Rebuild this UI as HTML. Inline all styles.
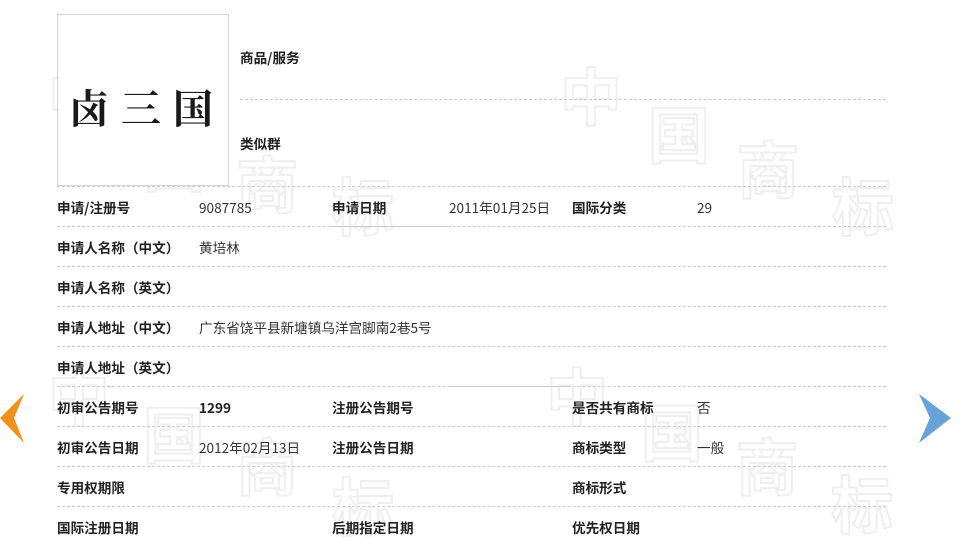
<!DOCTYPE html>
<html><head><meta charset="utf-8"><style>
body{margin:0;width:970px;height:544px;background:#fff;position:relative;overflow:hidden;font-family:"Noto Sans CJK SC","Liberation Sans",sans-serif;font-size:13.6px;color:#333}
.wm{position:absolute;font-size:62px;font-weight:bold;color:transparent;-webkit-text-stroke:2px #efefef;line-height:1;font-family:"WenQuanYi Zen Hei","Noto Sans CJK SC",sans-serif}
.logo{position:absolute;left:57px;top:14px;width:170px;height:170px;border:1px solid #d5d5d5;background:#fff}
.logo span{position:absolute;left:11px;top:68px;font-family:"Noto Serif CJK SC",serif;font-weight:bold;font-size:40px;letter-spacing:12px;color:#1a1a1a;line-height:1.2}
.t{position:absolute;white-space:nowrap;line-height:16px}
.b{font-weight:bold;color:#222}
.ln{position:absolute;border-top:1px dashed #ccc;height:0}
.sl{position:absolute;border-top:1px solid #c8c8c8;height:0}
</style></head><body>
<div class="wm" style="left:48px;top:62px">中</div>
<div class="wm" style="left:143px;top:128px">国</div>
<div class="wm" style="left:236px;top:150px">商</div>
<div class="wm" style="left:332px;top:172px">标</div>
<div class="wm" style="left:560px;top:62px">中</div>
<div class="wm" style="left:648px;top:100px">国</div>
<div class="wm" style="left:737px;top:135px">商</div>
<div class="wm" style="left:832px;top:172px">标</div>
<div class="wm" style="left:48px;top:362px">中</div>
<div class="wm" style="left:143px;top:400px">国</div>
<div class="wm" style="left:236px;top:432px">商</div>
<div class="wm" style="left:332px;top:472px">标</div>
<div class="wm" style="left:546px;top:362px">中</div>
<div class="wm" style="left:641px;top:398px">国</div>
<div class="wm" style="left:736px;top:432px">商</div>
<div class="wm" style="left:831px;top:470px">标</div>

<div class="logo"><span>卤三国</span></div>
<div class="t b" style="left:240px;top:49px">商品/服务</div>
<div class="ln" style="left:240px;width:646px;top:99px"></div>
<div class="t b" style="left:240px;top:135px">类似群</div>
<div class="ln" style="left:57px;width:829px;top:186px"></div>

<div class="t b" style="left:57px;top:199px">申请/注册号</div>
<div class="t" style="left:199px;top:199px">9087785</div>
<div class="t b" style="left:332px;top:199px">申请日期</div>
<div class="t" style="left:449px;top:199px">2011年01月25日</div>
<div class="t b" style="left:572px;top:199px">国际分类</div>
<div class="t" style="left:697px;top:199px">29</div>
<div class="ln" style="left:57px;width:829px;top:226px"></div>
<div class="sl" style="left:331px;width:120px;top:226px"></div>
<div class="t b" style="left:57px;top:239px">申请人名称（中文）</div>
<div class="t" style="left:199px;top:239px">黄培林</div>
<div class="ln" style="left:57px;width:829px;top:266px"></div>
<div class="t b" style="left:57px;top:279px">申请人名称（英文）</div>
<div class="ln" style="left:57px;width:829px;top:306px"></div>
<div class="t b" style="left:57px;top:319px">申请人地址（中文）</div>
<div class="t" style="left:199px;top:319px">广东省饶平县新塘镇乌洋宫脚南2巷5号</div>
<div class="ln" style="left:57px;width:829px;top:346px"></div>
<div class="t b" style="left:57px;top:359px">申请人地址（英文）</div>
<div class="ln" style="left:57px;width:829px;top:386px"></div>
<div class="sl" style="left:449px;width:120px;top:386px"></div>
<div class="t b" style="left:57px;top:399px">初审公告期号</div>
<div class="t b" style="left:199px;top:399px">1299</div>
<div class="t b" style="left:332px;top:399px">注册公告期号</div>
<div class="t b" style="left:572px;top:399px">是否共有商标</div>
<div class="t" style="left:697px;top:399px">否</div>
<div class="ln" style="left:57px;width:829px;top:426px"></div>
<div class="t b" style="left:57px;top:439px">初审公告日期</div>
<div class="t" style="left:199px;top:439px">2012年02月13日</div>
<div class="t b" style="left:332px;top:439px">注册公告日期</div>
<div class="t b" style="left:572px;top:439px">商标类型</div>
<div class="t" style="left:697px;top:439px">一般</div>
<div class="ln" style="left:57px;width:829px;top:466px"></div>
<div class="t b" style="left:57px;top:479px">专用权期限</div>
<div class="t b" style="left:572px;top:479px">商标形式</div>
<div class="ln" style="left:57px;width:829px;top:506px"></div>
<div class="t b" style="left:57px;top:519px">国际注册日期</div>
<div class="t b" style="left:332px;top:519px">后期指定日期</div>
<div class="t b" style="left:572px;top:519px">优先权日期</div>

<svg style="position:absolute;left:0;top:394px" width="26" height="50"><polygon points="24,0 0,24 24,49 14,24" fill="#f39019"/></svg>
<svg style="position:absolute;left:919px;top:394px" width="34" height="50"><polygon points="0,0 32,24 0,49 11,24" fill="#67a3d9"/></svg>
</body></html>
